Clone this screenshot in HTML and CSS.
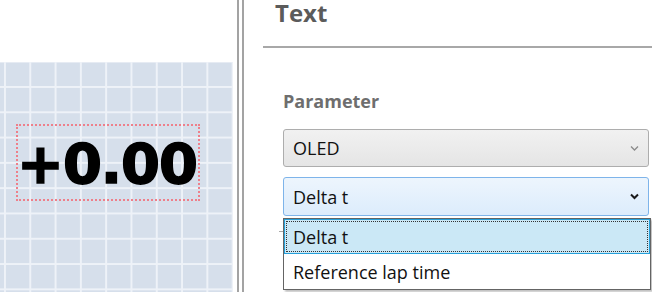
FILE: index.html
```html
<!DOCTYPE html>
<html>
<head>
<meta charset="utf-8">
<link rel="stylesheet" href="styles.css">
</head>
<body>
<div class="app">
  <div class="canvas-pane">
    <div class="grid">
      <div class="counter"><span class="counter-text">+0.00</span></div>
    </div>
  </div>
  <div class="splitter"></div>
  <div class="props">
    <div class="title">Text</div>
    <div class="title-rule"></div>
    <div class="section">
      <div class="label">Parameter</div>
      <div class="combo combo-normal">
        <span class="combo-text">OLED</span>
        <svg class="chev" width="9" height="7" viewBox="0 0 9 7"><polyline points="1,1.5 4.5,5 8,1.5" fill="none" stroke="#8a8a8a" stroke-width="1.3"/></svg>
      </div>
      <div class="combo-wrap">
        <div class="combo combo-open">
          <span class="combo-text">Delta t</span>
          <svg class="chev" width="9" height="7" viewBox="0 0 9 7"><polyline points="1,1.5 4.5,5 8,1.5" fill="none" stroke="#1a1a1a" stroke-width="2"/></svg>
        </div>
        <div class="under-rule"></div>
        <div class="dropdown">
          <div class="item item-selected"><span class="focus">Delta t</span></div>
          <div class="item">Reference lap time</div>
        </div>
      </div>
    </div>
  </div>
</div>
</body>
</html>
```
FILE: styles.css
```css
html, body {
  margin: 0;
  padding: 0;
  background: #ffffff;
}
.app {
  display: flex;
  width: 652px;
  height: 292px;
  overflow: hidden;
  font-family: "Open Sans", "DejaVu Sans", sans-serif;
}
.canvas-pane {
  width: 237px;
  flex: none;
  padding-top: 62px;
  box-sizing: border-box;
}
.grid {
  position: relative;
  width: 233px;
  height: 230px;
  background-color: #d6dfeb;
  background-image:
    linear-gradient(to right, #eef2f8 2px, transparent 2px),
    linear-gradient(to bottom, #eef2f8 2px, transparent 2px);
  background-size: 25.3px 25.3px;
  background-position: 4px 24px;
}
.counter {
  position: absolute;
  left: 16px;
  top: 62px;
  width: 184px;
  height: 77px;
  box-sizing: border-box;
  border: 2px dotted #ee7f8a;
  display: flex;
  align-items: center;
  justify-content: center;
}
.counter-text {
  font-family: "DejaVu Sans", sans-serif;
  font-weight: bold;
  font-size: 56px;
  letter-spacing: -1px;
  color: #000;
  -webkit-text-stroke: 1.6px #000;
  line-height: 1;
  margin-top: 2px;
  margin-left: -2px;
}
.splitter {
  width: 3px;
  flex: none;
  border-left: 2px solid #a3a3a3;
  border-right: 2px solid #a3a3a3;
}
.props {
  flex: 1;
  padding-left: 19px;
  min-width: 0;
}
.title {
  font-size: 24px;
  line-height: 26px;
  font-weight: bold;
  color: #5b5b5b;
  padding-left: 12px;
}
.title-rule {
  margin-top: 20px;
  height: 2px;
  background: #a8a8a8;
}
.section {
  padding-left: 20px;
  padding-right: 3px;
}
.label {
  margin-top: 41px;
  font-size: 18px;
  line-height: 24px;
  font-weight: bold;
  color: #6e6e6e;
}
.combo {
  display: flex;
  align-items: center;
  justify-content: space-between;
  box-sizing: border-box;
  border-radius: 3px;
  padding: 0 9px 0 9px;
  font-size: 18px;
  color: #111;
}
.combo-normal {
  margin-top: 16px;
  height: 38px;
  border: 1px solid #adadad;
  background: linear-gradient(to bottom, #f1f1f1, #e5e5e5);
}
.combo-wrap {
  position: relative;
  margin-top: 10px;
}
.combo-open {
  height: 39px;
  border: 1px solid #7eb4ea;
  background: linear-gradient(to bottom, #edf5fd, #dcecfc);
}
.combo-text {
  line-height: 24px;
}
.chev {
  display: block;
  margin-right: 0;
}
.under-rule {
  margin-top: 15px;
  margin-left: -4px;
  height: 1px;
  background: #a8a8a8;
}
.dropdown {
  position: absolute;
  left: 0;
  right: -2px;
  top: 41px;
  height: 72px;
  box-sizing: border-box;
  border: 1px solid #646464;
  background: #fff;
  box-shadow: 2px 2px 2px rgba(0, 0, 0, 0.25);
}
.item {
  height: 35px;
  box-sizing: border-box;
  display: flex;
  align-items: center;
  padding-left: 9px;
  font-size: 18px;
  color: #111;
}
.item-selected {
  border: 1px solid #26a0da;
  background: #cbe8f6;
  padding: 1px;
}
.focus {
  flex: 1;
  align-self: stretch;
  display: flex;
  align-items: center;
  border: 1px dotted #333;
  padding-left: 6px;
}
```
